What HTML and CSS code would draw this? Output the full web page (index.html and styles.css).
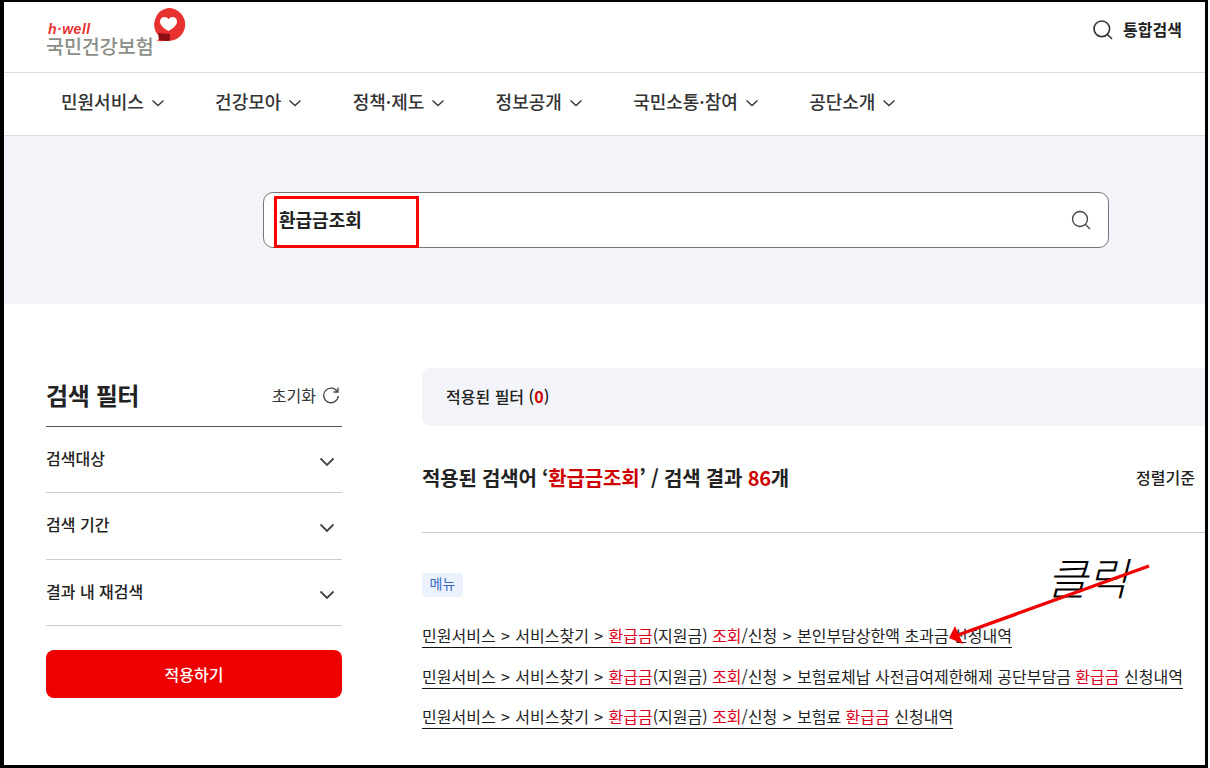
FILE: index.html
```html
<!DOCTYPE html>
<html lang="ko">
<head>
<meta charset="utf-8">
<title>국민건강보험 통합검색</title>
<link rel="stylesheet" href="styles.css">
</head>
<body>
<div class="frame">
  <header class="top">
    <div class="logo">
      <div class="logo-text">
        <span class="logo-en">h·well</span>
        <span class="logo-ko">국민건강보험</span>
      </div>
      <svg class="logo-mark" width="36" height="36" viewBox="0 0 36 36">
        <path d="M17 0a17 16.500 0 1 1-3 32.700c-2 .6-5 .6-8.500-.2 2-.7 3.200-1.800 3.800-3.500A16.500 16.500 0 0 1 17 0z" fill="#e8322f"/>
        <path d="M17.500 23c-4.500-2.500-8.500-5.500-8.500-9.500C9 11 11 9 13.300 9c1.800 0 3.200.9 4.200 2.300C18.500 9.900 19.900 9 21.700 9 24 9 26 11 26 13.500c0 4-4 7-8.500 9.500z" fill="#fff"/>
        <path d="M7 25l12 1v6.600l-5 .3-6-1z" fill="#8f0f12"/>
      </svg>
    </div>
    <div class="total-search">
      <svg width="20" height="20" viewBox="0 0 20 20" fill="none" stroke="#333" stroke-width="1.600"><circle cx="8.800" cy="8.800" r="7.800"/><path d="M14.500 14.500l4.500 4.500"/></svg>
      <span>통합검색</span>
    </div>
  </header>
  <nav class="nav">
    <a class="nav-item">민원서비스<svg class="caret" width="14" height="8" viewBox="0 0 14 8"><path d="M1.500 1.500L7 6.500l5.500-5"/></svg></a>
    <a class="nav-item">건강모아<svg class="caret" width="14" height="8" viewBox="0 0 14 8"><path d="M1.500 1.500L7 6.500l5.500-5"/></svg></a>
    <a class="nav-item">정책·제도<svg class="caret" width="14" height="8" viewBox="0 0 14 8"><path d="M1.500 1.500L7 6.500l5.500-5"/></svg></a>
    <a class="nav-item">정보공개<svg class="caret" width="14" height="8" viewBox="0 0 14 8"><path d="M1.500 1.500L7 6.500l5.500-5"/></svg></a>
    <a class="nav-item">국민소통·참여<svg class="caret" width="14" height="8" viewBox="0 0 14 8"><path d="M1.500 1.500L7 6.500l5.500-5"/></svg></a>
    <a class="nav-item">공단소개<svg class="caret" width="14" height="8" viewBox="0 0 14 8"><path d="M1.500 1.500L7 6.500l5.500-5"/></svg></a>
  </nav>
  <section class="band">
    <div class="searchbox">
      <span class="query">환급금조회</span>
      <svg width="22" height="22" viewBox="0 0 22 22" fill="none" stroke="#444" stroke-width="1.300"><circle cx="10" cy="10" r="7.500"/><path d="M15.500 15.500l4.500 4.500"/></svg>
    </div>
  </section>
  <main class="content">
    <aside class="filter">
      <div class="filter-head">
        <h2>검색 필터</h2>
        <span class="reset">초기화
          <svg width="18" height="18" viewBox="0 0 18 18" fill="none" stroke="#444" stroke-width="1.300"><path d="M15.500 6A7.300 7.300 0 1 0 16.300 10"/><path d="M16 1.500V6h-4.500"/></svg>
        </span>
      </div>
      <div class="acc"><span>검색대상</span><svg class="acc-caret" width="16" height="10" viewBox="0 0 16 10"><path d="M1.500 1.500L8 8l6.500-6.500"/></svg></div>
      <div class="acc"><span>검색 기간</span><svg class="acc-caret" width="16" height="10" viewBox="0 0 16 10"><path d="M1.500 1.500L8 8l6.500-6.500"/></svg></div>
      <div class="acc"><span>결과 내 재검색</span><svg class="acc-caret" width="16" height="10" viewBox="0 0 16 10"><path d="M1.500 1.500L8 8l6.500-6.500"/></svg></div>
      <button class="apply">적용하기</button>
    </aside>
    <div class="results">
      <div class="applied">적용된 필터 (<em>0</em>)</div>
      <div class="summary">
        <h3>적용된 검색어 ‘<em>환급금조회</em>’ / 검색 결과 <em>86</em>개</h3>
        <span class="sort">정렬기준</span>
      </div>
      <span class="badge">메뉴</span>
      <ul class="links">
        <li><a>민원서비스 <i class="gt">&gt;</i> 서비스찾기 <i class="gt">&gt;</i> <em>환급금</em>(지원금) <em>조회</em>/신청 <i class="gt">&gt;</i> 본인부담상한액 초과금 신청내역</a></li>
        <li><a>민원서비스 <i class="gt">&gt;</i> 서비스찾기 <i class="gt">&gt;</i> <em>환급금</em>(지원금) <em>조회</em>/신청 <i class="gt">&gt;</i> 보험료체납 사전급여제한해제 공단부담금 <em>환급금</em> 신청내역</a></li>
        <li><a>민원서비스 <i class="gt">&gt;</i> 서비스찾기 <i class="gt">&gt;</i> <em>환급금</em>(지원금) <em>조회</em>/신청 <i class="gt">&gt;</i> 보험료 <em>환급금</em> 신청내역</a></li>
      </ul>
    </div>
  </main>
  <div class="redbox"></div>
  <span class="click-note">클릭</span>
  <svg class="arrow" width="220" height="90" viewBox="0 0 220 90">
    <path d="M206 3L15 72" stroke="#f00000" stroke-width="3.400" fill="none"/>
    <path d="M6 75l6-12 8 18z" fill="#f00000"/>
  </svg>
</div>
</body>
</html>
```

FILE: styles.css
```css
* { box-sizing: border-box; }
html, body { margin: 0; padding: 0; background: #fff; }
body { font-family: "Noto Sans CJK KR", "Noto Sans", sans-serif; color: #222; }
em { font-style: normal; color: #dc0020; }
h2, h3 { margin: 0; }

.frame {
  position: relative;
  width: 1208px;
  height: 768px;
  border-style: solid;
  border-color: #000;
  border-width: 2px 3px 3px 4px;
  overflow: hidden;
  background: #fff;
}

.top {
  height: 71px;
  border-bottom: 1px solid #dcdcdc;
  display: flex;
  justify-content: space-between;
  align-items: flex-start;
  padding: 6px 23px 0 42px;
}
.logo { display: flex; align-items: flex-start; }
.logo-text { display: flex; flex-direction: column; padding-top: 15px; }
.logo-en {
  font-family: "Liberation Sans", sans-serif;
  font-style: italic;
  font-weight: 700;
  font-size: 14px;
  line-height: 13px;
  letter-spacing: .5px;
  color: #e8322f;
  padding-left: 2px;
}
.logo-ko {
  font-size: 19.600px;
  line-height: 20px;
  font-weight: 500;
  color: #8b8e86;
  letter-spacing: -.1px;
}
.logo-mark { margin-left: -3px; margin-top: 0; }
.total-search {
  display: flex;
  align-items: center;
  gap: 10px;
  font-size: 16px;
  font-weight: 700;
  height: 32px;
  padding-top: 12px;
}
.total-search span { margin-top: -2px; }

.nav {
  height: 63px;
  border-bottom: 1px solid #dcdcdc;
  display: flex;
  align-items: center;
  padding: 0 0 6px 57px;
  gap: 50.300px;
}
.nav-item {
  display: flex;
  align-items: center;
  gap: 7px;
  font-size: 18px;
  font-weight: 500;
  color: #333;
}
.caret { fill: none; stroke: #333; stroke-width: 1.300; margin-top: 4px; }

.band {
  height: 168px;
  background: #f2f4f9;
  padding: 56px 0 0 259px;
}
.searchbox {
  width: 846px;
  height: 56px;
  background: #fff;
  border: 1px solid #777;
  border-radius: 10px;
  display: flex;
  align-items: center;
  justify-content: space-between;
  padding: 0 16px 0 15px;
}
.query { font-size: 18px; font-weight: 700; color: #222; padding-bottom: 2px; }

.content {
  display: flex;
  align-items: flex-start;
  padding: 64px 0 0 42px;
  gap: 80px;
}
.filter { width: 296px; flex: none; }
.filter-head {
  height: 59px;
  border-bottom: 1px solid #555;
  display: flex;
  align-items: center;
  justify-content: space-between;
  padding-bottom: 4px;
}
.filter-head h2 { font-size: 24px; font-weight: 700; line-height: 30px; color: #222; letter-spacing: -.4px; }
.reset {
  display: flex;
  align-items: center;
  gap: 6px;
  font-size: 16px;
  color: #333;
  padding-right: 2px;
}
.acc {
  height: 66.330px;
  border-bottom: 1px solid #ccc;
  display: flex;
  align-items: center;
  justify-content: space-between;
  font-size: 16px;
  font-weight: 500;
  color: #222;
  padding: 0 7px 2px 0;
}
.acc span { margin-top: -1px; }
.acc-caret { fill: none; stroke: #444; stroke-width: 1.800; margin-top: 7px; }
.apply {
  display: block;
  width: 100%;
  height: 48px;
  margin-top: 24px;
  border: 0;
  border-radius: 8px;
  background: #ee0000;
  color: #fff;
  font: 500 16px "Noto Sans CJK KR", sans-serif;
}

.results { width: 900px; flex: none; }
.applied {
  height: 58px;
  background: #f2f4f9;
  border-radius: 8px;
  display: flex;
  align-items: center;
  padding: 0 0 2px 24px;
  font-size: 16px;
  font-weight: 500;
  color: #222;
  white-space: pre;
}
.applied em { font-weight: 700; color: #cf0000; }
.summary {
  height: 107px;
  border-bottom: 1px solid #ccc;
  display: flex;
  align-items: center;
  padding-bottom: 4px;
  margin-bottom: 40px;
}
.summary h3 { font-size: 20px; font-weight: 700; color: #222; width: 714px; flex: none; letter-spacing: -.2px; }
.summary em { color: #cf0000; }
.sort { font-size: 16px; font-weight: 500; color: #222; }
.badge {
  display: inline-block;
  width: 41px;
  height: 24px;
  background: #ebf2fe;
  border-radius: 4px;
  color: #3c6cc4;
  font-size: 14px;
  line-height: 21px;
  text-align: center;
  vertical-align: top;
}
.links { list-style: none; margin: 26px 0 0; padding: 0; }
.links li { height: 40.500px; font-size: 16px; line-height: 24px; white-space: nowrap; }
.links a { color: #222; border-bottom: 1px solid #111; display: inline-block; line-height: 23px; }
.gt { font-style: normal; margin: 0 .9px; }

.redbox {
  position: absolute;
  left: 270px;
  top: 194px;
  width: 145px;
  height: 52px;
  border: 3px solid #f00;
}
.click-note {
  position: absolute;
  left: 1043px;
  top: 544px;
  font-size: 44px;
  line-height: 60px;
  font-style: italic;
  font-weight: 300;
  color: #000;
}
.arrow { position: absolute; left: 939px; top: 561px; }
```
